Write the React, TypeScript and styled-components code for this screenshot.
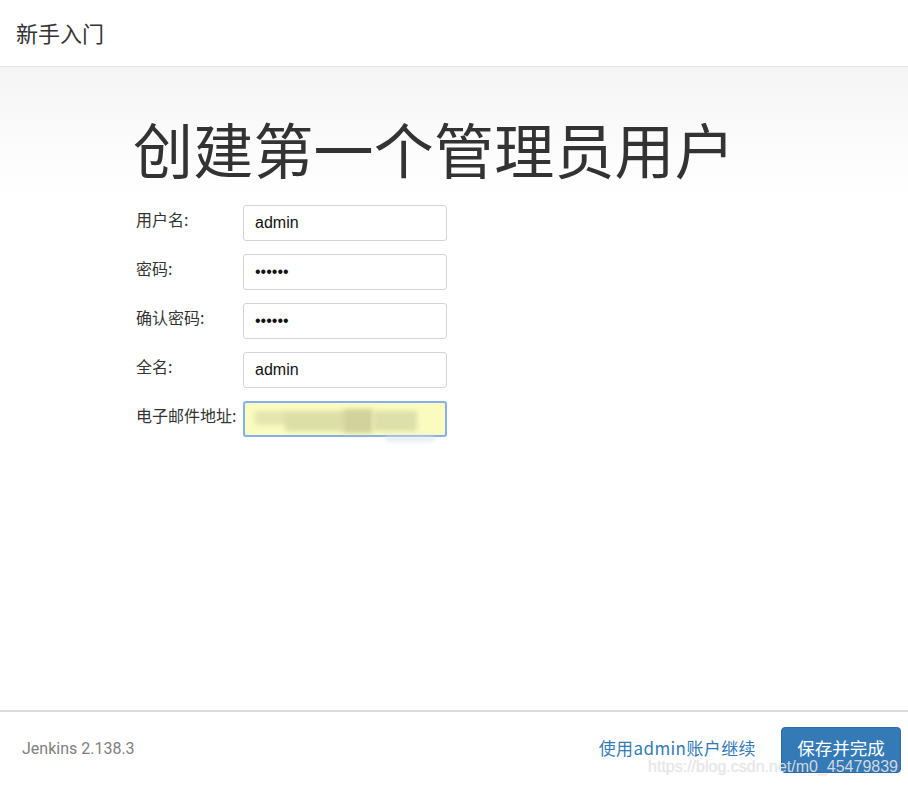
import React from "react";
import styled, { createGlobalStyle } from "styled-components";

const GlobalStyle = createGlobalStyle`
  html, body { margin: 0; padding: 0; background: #fff; }
  body { font-family: "Noto Sans CJK SC", "Liberation Sans", sans-serif; color: #333; }
  * { box-sizing: border-box; }
`;

const Page = styled.div`
  width: 908px;
  height: 785px;
  display: flex;
  flex-direction: column;
  position: relative;
  overflow: hidden;
`;

const Header = styled.header`
  height: 67px;
  flex: none;
  display: flex;
  align-items: center;
  padding: 0 16px 2px;
  border-bottom: 1px solid #e3e3e3;
  font-size: 22px;
  color: #333;
  font-family: "Noto Sans CJK SC", sans-serif;
`;

const Main = styled.main`
  flex: 1;
  background: linear-gradient(to bottom, #f5f5f5 0px, #fafafa 60px, #ffffff 130px);
  padding: 45px 0 0 133px;
`;

const Title = styled.h1`
  margin: 0 0 21px;
  font-size: 60px;
  line-height: 72px;
  font-weight: 400;
  color: #333;
  letter-spacing: 0.2px;
  font-family: "Noto Sans CJK SC", sans-serif;
`;

const Form = styled.div`
  display: flex;
  flex-direction: column;
  gap: 13px;
  padding-left: 3px;
`;

const Row = styled.div`
  display: flex;
  align-items: flex-start;
  height: 36px;
`;

const Label = styled.label`
  width: 107px;
  flex: none;
  font-size: 16px;
  line-height: 22px;
  padding-top: 3px;
  color: #333;
  white-space: nowrap;
  font-family: "Noto Sans CJK SC", sans-serif;
`;

const Field = styled.div<{ $autofill?: boolean }>`
  position: relative;
  width: 204px;
  height: 36px;
  border: ${(p) => (p.$autofill ? "2px solid #86aef0" : "1px solid #d4d4d4")};
  border-radius: 3px;
  background: ${(p) => (p.$autofill ? "#f9fbbf" : "#fff")};
  display: flex;
  align-items: center;
  padding-left: 11px;
  font-family: "Liberation Sans", Arial, sans-serif;
  font-size: 16px;
  color: #111;
`;

const Dots = styled.span`
  font-size: 16px;
  color: #111;
`;

const Smudge = styled.span`
  position: absolute;
  display: block;
  filter: blur(2px);
  border-radius: 3px;
`;

const Footer = styled.footer`
  height: 75px;
  flex: none;
  border-top: 2px solid #dcdcdc;
  display: flex;
  align-items: center;
  padding: 0 7px 0 22px;
`;

const Version = styled.span`
  font-family: Roboto, "Liberation Sans", sans-serif;
  font-size: 16px;
  color: #808080;
  flex: 1;
`;

const Link = styled.a`
  font-family: "Noto Sans CJK SC", sans-serif;
  font-size: 17px;
  letter-spacing: 0.4px;
  color: #337ab7;
  text-decoration: none;
  margin-right: 25px;
  margin-top: -2px;
`;

const Button = styled.button`
  width: 120px;
  height: 46px;
  margin-top: 2px;
  border: 1px solid #2e6da4;
  border-radius: 4px;
  background: #337ab7;
  color: #fff;
  font-size: 17.5px;
  font-family: "Noto Sans CJK SC", sans-serif;
  padding: 0;
  padding-bottom: 4px;
`;

const Watermark = styled.div`
  position: absolute;
  right: 10px;
  bottom: 9px;
  font-family: "Liberation Sans", Arial, sans-serif;
  font-size: 16px;
  color: rgba(232, 232, 236, 0.9);
  text-shadow: 0 0 1px rgba(0, 0, 0, 0.12);
  pointer-events: none;
`;

const rows = [
  { label: "用户名:", value: "admin" },
  { label: "密码:", value: "••••••", password: true },
  { label: "确认密码:", value: "••••••", password: true },
  { label: "全名:", value: "admin" },
];

export default function App() {
  return (
    <Page>
      <GlobalStyle />
      <Header>新手入门</Header>
      <Main>
        <Title>创建第一个管理员用户</Title>
        <Form>
          {rows.map((r) => (
            <Row key={r.label}>
              <Label>{r.label}</Label>
              <Field>{r.password ? <Dots>{r.value}</Dots> : r.value}</Field>
            </Row>
          ))}
          <Row>
            <Label>电子邮件地址:</Label>
            <Field $autofill>
              <Smudge style={{ left: 10, top: 8, width: 90, height: 14, background: "#e4e6b0" }} />
              <Smudge style={{ left: 40, top: 10, width: 60, height: 18, background: "#dcdfa6" }} />
              <Smudge style={{ left: 98, top: 6, width: 30, height: 24, background: "#d2d39c" }} />
              <Smudge style={{ left: 128, top: 8, width: 44, height: 20, background: "#dde0a8" }} />
              <Smudge style={{ left: 140, top: 34, width: 50, height: 4, background: "#dfe6ee" }} />
            </Field>
          </Row>
        </Form>
      </Main>
      <Footer>
        <Version>Jenkins 2.138.3</Version>
        <Link href="#">使用admin账户继续</Link>
        <Button>保存并完成</Button>
      </Footer>
      <Watermark>https://blog.csdn.net/m0_45479839</Watermark>
    </Page>
  );
}
